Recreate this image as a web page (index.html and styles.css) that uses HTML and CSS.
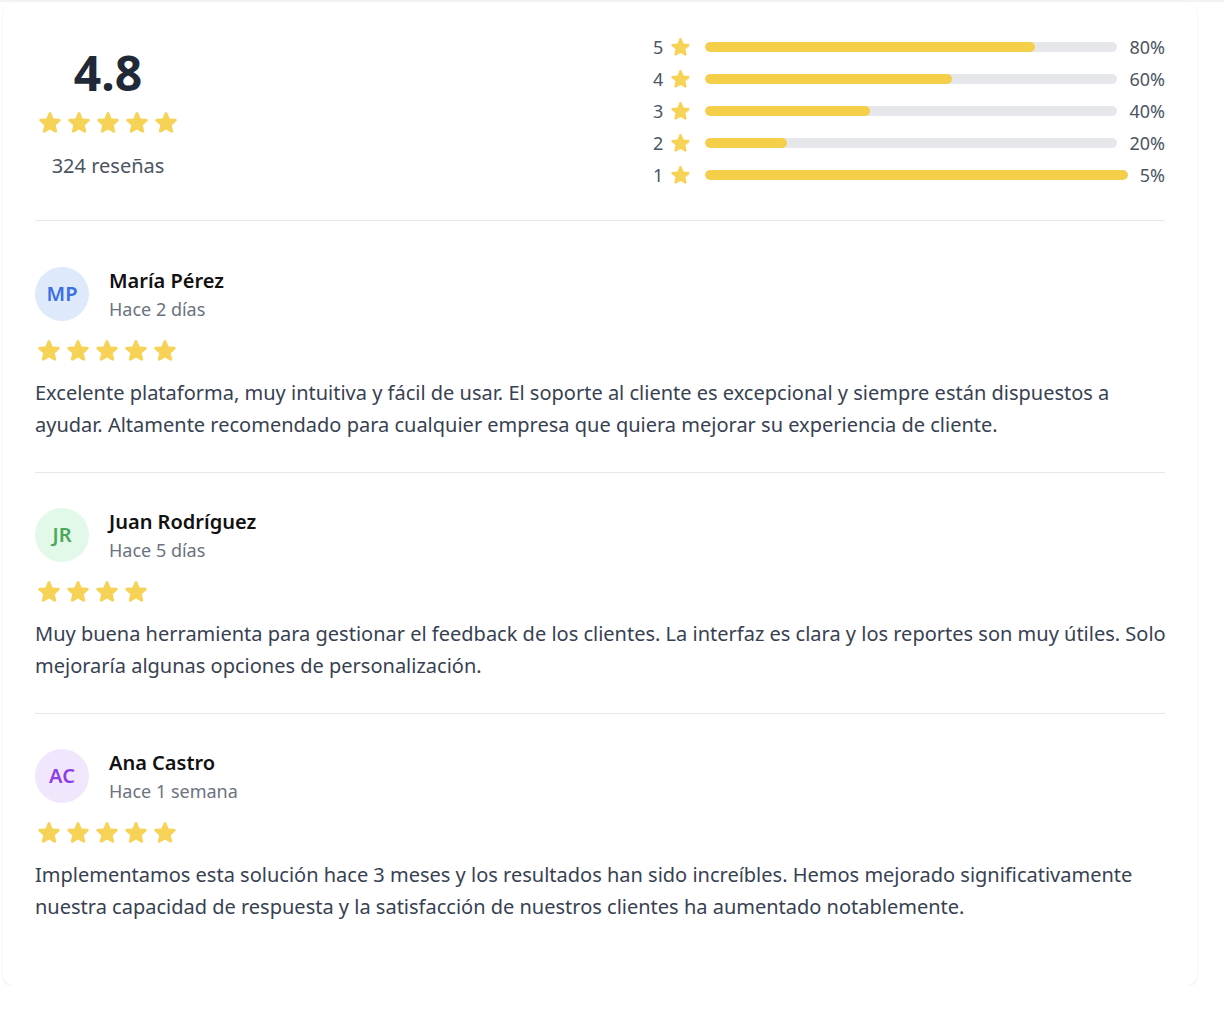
FILE: index.html
```html
<!DOCTYPE html>
<html lang="es">
<head>
<meta charset="utf-8">
<title>Reseñas</title>
<link rel="stylesheet" href="styles.css">
</head>
<body>
<svg width="0" height="0" class="defs">
  <defs>
    <symbol id="star" viewBox="1.9 2.3 20.2 19.4">
      <path fill-rule="evenodd" clip-rule="evenodd" d="M10.788 3.21c.448-1.077 1.976-1.077 2.424 0l2.082 5.006 5.404.434c1.164.093 1.636 1.545.749 2.305l-4.117 3.527 1.257 5.273c.271 1.136-.964 2.033-1.96 1.425L12 18.354 7.373 21.18c-.996.608-2.231-.29-1.960-1.425l1.257-5.273-4.117-3.527c-.887-.76-.415-2.212.749-2.305l5.404-.434 2.082-5.005Z"/>
    </symbol>
  </defs>
</svg>
<div class="card">
  <section class="summary">
    <div class="overall">
      <div class="score">4.8</div>
      <div class="stars stars-big">
        <svg><use href="#star"/></svg><svg><use href="#star"/></svg><svg><use href="#star"/></svg><svg><use href="#star"/></svg><svg><use href="#star"/></svg>
      </div>
      <div class="count">324 reseñas</div>
    </div>
    <div class="dist">
      <div class="dist-row"><span class="dist-num">5</span><svg class="dist-star"><use href="#star"/></svg><div class="track"><div class="fill" style="width:80%"></div></div><span class="pct">80%</span></div>
      <div class="dist-row"><span class="dist-num">4</span><svg class="dist-star"><use href="#star"/></svg><div class="track"><div class="fill" style="width:60%"></div></div><span class="pct">60%</span></div>
      <div class="dist-row"><span class="dist-num">3</span><svg class="dist-star"><use href="#star"/></svg><div class="track"><div class="fill" style="width:40%"></div></div><span class="pct">40%</span></div>
      <div class="dist-row"><span class="dist-num">2</span><svg class="dist-star"><use href="#star"/></svg><div class="track"><div class="fill" style="width:20%"></div></div><span class="pct">20%</span></div>
      <div class="dist-row"><span class="dist-num">1</span><svg class="dist-star"><use href="#star"/></svg><div class="track"><div class="fill" style="width:100%"></div></div><span class="pct">5%</span></div>
    </div>
  </section>

  <article class="review review-first">
    <div class="head">
      <div class="avatar av-blue">MP</div>
      <div class="who">
        <div class="name">María Pérez</div>
        <div class="date">Hace 2 días</div>
      </div>
    </div>
    <div class="stars stars-review">
      <svg><use href="#star"/></svg><svg><use href="#star"/></svg><svg><use href="#star"/></svg><svg><use href="#star"/></svg><svg><use href="#star"/></svg>
    </div>
    <p class="text">Excelente plataforma, muy intuitiva y fácil de usar. El soporte al cliente es excepcional y siempre están dispuestos a ayudar. Altamente recomendado para cualquier empresa que quiera mejorar su experiencia de cliente.</p>
  </article>

  <article class="review">
    <div class="head">
      <div class="avatar av-green">JR</div>
      <div class="who">
        <div class="name">Juan Rodríguez</div>
        <div class="date">Hace 5 días</div>
      </div>
    </div>
    <div class="stars stars-review">
      <svg><use href="#star"/></svg><svg><use href="#star"/></svg><svg><use href="#star"/></svg><svg><use href="#star"/></svg>
    </div>
    <p class="text">Muy buena herramienta para gestionar el feedback de los clientes. La interfaz es clara y los reportes son muy útiles. Solo mejoraría algunas opciones de personalización.</p>
  </article>

  <article class="review review-last">
    <div class="head">
      <div class="avatar av-purple">AC</div>
      <div class="who">
        <div class="name">Ana Castro</div>
        <div class="date">Hace 1 semana</div>
      </div>
    </div>
    <div class="stars stars-review">
      <svg><use href="#star"/></svg><svg><use href="#star"/></svg><svg><use href="#star"/></svg><svg><use href="#star"/></svg><svg><use href="#star"/></svg>
    </div>
    <p class="text">Implementamos esta solución hace 3 meses y los resultados han sido increíbles. Hemos mejorado significativamente nuestra capacidad de respuesta y la satisfacción de nuestros clientes ha aumentado notablemente.</p>
  </article>
</div>
</body>
</html>
```

FILE: styles.css
```css
html {
  border-top: 2px solid #f1f2f4;
  background: #ffffff;
}
body {
  margin: 0;
  padding: 1px 27px 0 3px;
  font-family: "Noto Sans", "Open Sans", sans-serif;
  color: #374151;
}
.defs {
  position: absolute;
}
.card {
  background: #ffffff;
  border-radius: 12px;
  box-shadow: 0 1px 3px rgba(0, 0, 0, 0.06), 0 1px 2px rgba(0, 0, 0, 0.03);
  padding: 32px 32px 32px;
}
.summary {
  display: flex;
  justify-content: space-between;
  align-items: center;
  padding-bottom: 33px;
  border-bottom: 1px solid #e5e7eb;
}
.overall {
  width: 146px;
  display: flex;
  flex-direction: column;
  align-items: center;
  padding-top: 7px;
}
.score {
  font-size: 48px;
  line-height: 48px;
  font-weight: 700;
  color: #1f2937;
}
.stars {
  display: flex;
  gap: 7px;
  color: #f6d356;
}
.stars svg {
  width: 22px;
  height: 21px;
  fill: currentColor;
}
.stars-big {
  margin-top: 15px;
}
.count {
  margin-top: 19px;
  font-size: 20px;
  line-height: 28px;
  color: #4b5563;
}
.dist {
  width: 512px;
  display: flex;
  flex-direction: column;
  gap: 8px;
}
.dist-row {
  display: flex;
  align-items: center;
  height: 24px;
}
.dist-num {
  width: 10px;
  font-size: 18px;
  line-height: 24px;
  color: #4b5563;
}
.dist-star {
  width: 19px;
  height: 18px;
  margin-left: 8px;
  fill: #f6d356;
}
.track {
  flex: 1;
  height: 10px;
  margin-left: 15px;
  background: #e5e7eb;
  border-radius: 9999px;
  overflow: hidden;
}
.fill {
  height: 100%;
  background: #f4cf4a;
  border-radius: 9999px;
}
.pct {
  margin-left: 12px;
  font-size: 18px;
  line-height: 24px;
  color: #4b5563;
}
.review {
  padding: 32px 0 31px;
  border-bottom: 1px solid #e5e7eb;
}
.review-first {
  padding-top: 43px;
}
.review-last {
  border-bottom: none;
  padding-bottom: 31px;
}
.head {
  display: flex;
  align-items: center;
  gap: 20px;
}
.avatar {
  width: 54px;
  height: 54px;
  border-radius: 50%;
  display: flex;
  align-items: center;
  justify-content: center;
  font-size: 20px;
  font-weight: 600;
}
.av-blue {
  background: #dfe9fc;
  color: #3b6fe3;
}
.av-green {
  background: #e2f8e8;
  color: #4ba85a;
}
.av-purple {
  background: #f1e7fd;
  color: #8f3ee6;
}
.who {
  display: flex;
  flex-direction: column;
  padding-top: 3px;
}
.name {
  font-size: 20px;
  line-height: 28px;
  font-weight: 600;
  color: #111111;
}
.date {
  font-size: 18px;
  line-height: 28px;
  color: #6b7280;
}
.stars-review {
  margin-top: 17px;
  padding-left: 3px;
}
.text {
  margin: 16px -6px 0 0;
  font-size: 20px;
  line-height: 32px;
  color: #374151;
}
```
